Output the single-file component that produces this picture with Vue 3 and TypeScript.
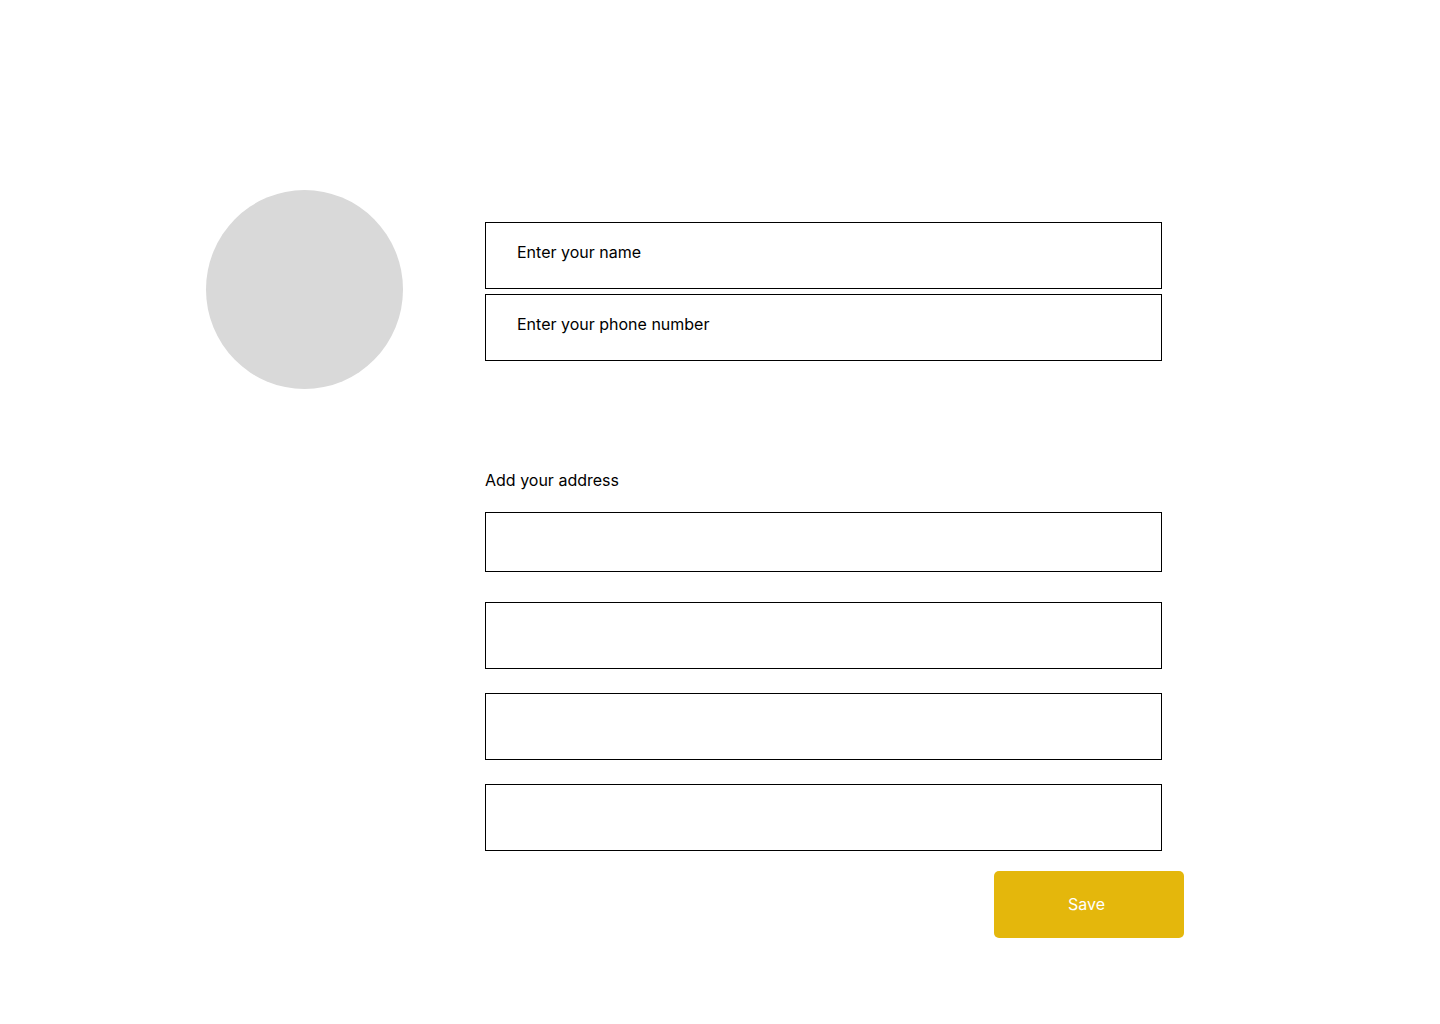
<script setup lang="ts">
import { reactive, ref } from 'vue'

interface Profile {
  name: string
  phone: string
  address: string[]
}

const profile = reactive<Profile>({
  name: '',
  phone: '',
  address: ['', '', '', ''],
})

const saved = ref(false)

function save(): void {
  saved.value = true
}
</script>

<template>
  <main class="page">
    <div class="avatar" role="img" aria-label="Profile picture"></div>
    <form class="form" @submit.prevent="save">
      <div class="contact">
        <input
          v-model="profile.name"
          class="field"
          type="text"
          aria-label="Enter your name"
          placeholder="Enter your name"
        />
        <input
          v-model="profile.phone"
          class="field"
          type="tel"
          aria-label="Enter your phone number"
          placeholder="Enter your phone number"
        />
      </div>
      <label class="address-label" for="address-0">Add your address</label>
      <div class="address">
        <input
          v-for="(_, index) in profile.address"
          :id="`address-${index}`"
          :key="index"
          v-model="profile.address[index]"
          class="field"
          :class="{ 'field-first': index === 0 }"
          type="text"
          :aria-label="index === 0 ? undefined : `Address line ${index + 1}`"
        />
      </div>
      <button class="save" type="submit">Save</button>
    </form>
  </main>
</template>

<style>
body {
  margin: 0;
  background: #ffffff;
}
</style>

<style scoped>
.page {
  display: flex;
  align-items: flex-start;
  gap: 82px;
  box-sizing: border-box;
  padding: 190px 256px 86px 206px;
  color: #000000;
  font-family: Inter, "Liberation Sans", sans-serif;
  font-size: 16px;
  line-height: 20px;
}

.avatar {
  flex: none;
  width: 197px;
  height: 199px;
  border-radius: 50%;
  background: #d9d9d9;
}

.form {
  display: flex;
  flex: 1;
  flex-direction: column;
  min-width: 0;
  padding-top: 32px;
}

.contact,
.address {
  display: flex;
  flex-direction: column;
  margin-right: 22px;
}

.contact {
  gap: 5px;
}

.address {
  gap: 24px;
}

.field {
  box-sizing: border-box;
  width: 100%;
  height: 67px;
  margin: 0;
  padding: 0 31px 8px;
  border: 1px solid #000000;
  border-radius: 0;
  background: #ffffff;
  color: inherit;
  font: inherit;
}

.field::placeholder {
  color: #000000;
  opacity: 1;
}

.field-first {
  height: 60px;
  margin-bottom: 6px;
}

.address-label {
  align-self: flex-start;
  margin: 109px 0 22px;
}

.save {
  align-self: flex-end;
  box-sizing: border-box;
  width: 190px;
  height: 67px;
  margin: 20px 0 0;
  padding: 0 5px 2px 0;
  border: 0;
  border-radius: 5px;
  background: #e4b70c;
  color: #ffffff;
  font: inherit;
  cursor: pointer;
}
</style>
